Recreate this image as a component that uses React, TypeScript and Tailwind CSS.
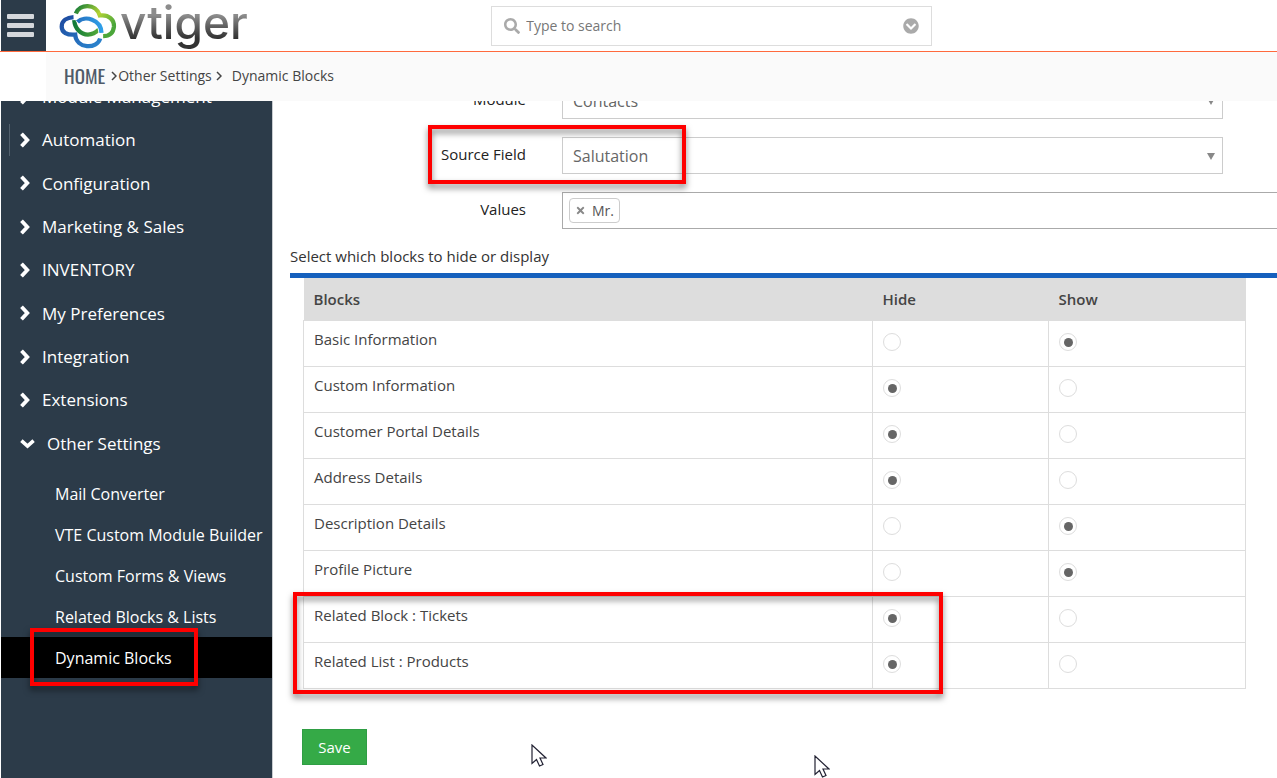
import { FaChevronCircleDown, FaSearch, FaTimes } from 'react-icons/fa';

const menu = [
  'Module Management',
  'Automation',
  'Configuration',
  'Marketing & Sales',
  'INVENTORY',
  'My Preferences',
  'Integration',
  'Extensions',
];

const subMenu = [
  'Mail Converter',
  'VTE Custom Module Builder',
  'Custom Forms & Views',
  'Related Blocks & Lists',
  'Dynamic Blocks',
];

const blocks = [
  { name: 'Basic Information', hidden: false },
  { name: 'Custom Information', hidden: true },
  { name: 'Customer Portal Details', hidden: true },
  { name: 'Address Details', hidden: true },
  { name: 'Description Details', hidden: false },
  { name: 'Profile Picture', hidden: false },
  { name: 'Related Block : Tickets', hidden: true },
  { name: 'Related List : Products', hidden: true },
];

const Highlight = ({ className }: { className: string }) => (
  <div
    className={`pointer-events-none absolute z-10 border-4 border-[#fe0000] drop-shadow-[0_4px_3px_rgba(0,0,0,0.5)] ${className}`}
  />
);

const Pointer = ({ className }: { className: string }) => (
  <svg viewBox="0 0 16 24" className={`pointer-events-none absolute h-6 w-4 ${className}`}>
    <path
      d="M1 1v18.500l4.500-4 3 6.500 3.500-1.500-3-6.500h6z"
      fill="#fff"
      stroke="#222233"
      strokeWidth="1.200"
    />
  </svg>
);

const Crumb = () => (
  <svg viewBox="0 0 6 10" className="h-[10px] w-[6px]" fill="none" stroke="currentColor" strokeWidth="1.500">
    <path d="M1 1L5 5L1 9" />
  </svg>
);

const Logo = () => (
  <a href="#" aria-label="vtiger" className="ml-3 flex items-center gap-0.5">
    <svg viewBox="176 6 180 140" className="h-[46px] w-[60px]" fill="none" strokeWidth="13">
      <defs>
        <linearGradient id="leaf" x1="0" y1="0" x2="1" y2="0.6">
          <stop offset="0" stopColor="#127a38" />
          <stop offset="0.55" stopColor="#b4d434" />
          <stop offset="1" stopColor="#4ba63a" />
        </linearGradient>
        <linearGradient id="fern" x1="0" y1="0" x2="1" y2="0">
          <stop offset="0" stopColor="#127a38" />
          <stop offset="1" stopColor="#55ab39" />
        </linearGradient>
        <linearGradient id="sea" x1="0" y1="0" x2="1" y2="1">
          <stop offset="0" stopColor="#1e4a9f" />
          <stop offset="1" stopColor="#2b86cf" />
        </linearGradient>
        <linearGradient id="sky" x1="0" y1="0" x2="1" y2="0">
          <stop offset="0" stopColor="#2672c0" />
          <stop offset="1" stopColor="#2f9fe8" />
        </linearGradient>
      </defs>
      <path d="M229 38C240 8 290 6 302 44C330 40 346 58 345 78C343 98 330 107 312 107" stroke="url(#leaf)" />
      <path d="M222 49C202 50 186 60 186 78C186 96 202 104 227 102C230 146 294 148 303 114" stroke="url(#sea)" />
      <path d="M224 58C226 84 244 102 266 102C282 102 290 96 300 86" stroke="url(#fern)" />
      <path d="M234 66C256 42 306 56 307 97" stroke="#ffffff" strokeWidth="18" />
      <path d="M234 64C256 42 306 56 307 97" stroke="url(#sky)" />
    </svg>
    <span className="self-start bg-linear-to-b from-[#8c8c8c] from-30% to-[#333333] to-75% bg-clip-text pb-[7px] font-['Inter'] text-[46px] leading-[44px] font-medium text-transparent">
      vtiger
    </span>
  </a>
);

const Sidebar = () => (
  <nav className="ml-px w-[272px] shrink-0 border-r border-[#c8ccd0] bg-[#2c3b49] text-white">
    <ul className="-mt-[26px] grid h-[390px] auto-rows-fr text-[17px]">
      {menu.map((item) => (
        <li key={item} className="relative flex items-center">
          {item === 'Automation' && <span className="absolute left-2 h-8 w-px bg-[#52606d]" />}
          <a href="#" className="flex items-center gap-3 pl-[19px]">
            <svg viewBox="0 0 10 16" className="h-4 w-[10px]" fill="none" stroke="currentColor" strokeWidth="3.800">
              <path d="M1.500 1.800L7.300 8L1.500 14.200" />
            </svg>
            {item}
          </a>
        </li>
      ))}
      <li className="flex items-center">
        <a href="#" className="flex items-center gap-3 pl-[19px]">
          <svg viewBox="0 0 16 12" className="h-3 w-[15px]" fill="none" stroke="currentColor" strokeWidth="3.800">
            <path d="M1.500 3.500L8 9.300L14.500 3.500" />
          </svg>
          Other Settings
        </a>
      </li>
    </ul>
    <ul className="mt-2 text-base">
      {subMenu.map((item) => (
        <li key={item} className={item === 'Dynamic Blocks' ? 'relative bg-black' : ''}>
          <a href="#" className="flex h-[41px] items-center pl-[54px] whitespace-nowrap">
            {item}
          </a>
          {item === 'Dynamic Blocks' && <Highlight className="-top-[9px] left-[29px] h-[58px] w-[168px]" />}
        </li>
      ))}
    </ul>
  </nav>
);

const SelectRow = ({ id, label, value, marked }: { id: string; label: string; value: string; marked?: boolean }) => (
  <div className="relative flex h-[37px]">
    <label htmlFor={id} className="w-[253px] shrink-0 pt-[6px] text-right text-[#222222]">
      {label}
    </label>
    <div className="relative mr-[54px] ml-9 flex-1">
      <select id={id} className="h-full w-full appearance-none border border-[#cccccc] bg-white px-[10px] pt-px text-base text-[#666666]">
        <option>{value}</option>
      </select>
      <svg viewBox="0 0 8 7" className="pointer-events-none absolute top-4 right-2 h-[7px] w-2">
        <path d="M0 0h8L4 7z" fill="#888888" />
      </svg>
    </div>
    {marked && <Highlight className="-top-3 left-[155px] h-[59px] w-[258px]" />}
  </div>
);

const Choice = ({ name, label, checked }: { name: string; label: string; checked: boolean }) => (
  <input
    type="radio"
    name={name}
    aria-label={label}
    defaultChecked={checked}
    className="grid size-[18px] appearance-none place-items-center rounded-full border border-[#dddddd] bg-white before:size-[9px] before:rounded-full checked:before:bg-[#666666]"
  />
);

const BlocksTable = () => (
  <div className="relative mr-[31px] ml-[30px]">
    <table className="w-full table-fixed border-collapse text-left text-[#444444]">
      <thead>
        <tr className="h-[43px] bg-[#dddddd]">
          <th className="px-[10px] font-semibold">Blocks</th>
          <th className="w-[176px] px-[10px] font-semibold">Hide</th>
          <th className="w-[197px] px-[10px] font-semibold">Show</th>
        </tr>
      </thead>
      <tbody>
        {blocks.map(({ name, hidden }) => (
          <tr key={name} className="h-[46px] align-top">
            <td className="border border-[#dddddd] px-[10px] pt-[7px]">{name}</td>
            <td className="border border-[#dddddd] px-[10px] pt-3">
              <Choice name={name} label={`Hide ${name}`} checked={hidden} />
            </td>
            <td className="border border-[#dddddd] px-[10px] pt-3">
              <Choice name={name} label={`Show ${name}`} checked={!hidden} />
            </td>
          </tr>
        ))}
      </tbody>
    </table>
    <Highlight className="-bottom-[5px] -left-[10px] h-[102px] w-[650px]" />
  </div>
);

const App = () => {
  return (
    <div className="flex h-screen flex-col overflow-hidden bg-white font-['Open_Sans',sans-serif] text-[15px]">
      <header className="flex h-[52px] shrink-0 border-b border-b-[#ff6a3d]">
        <button aria-label="Menu" className="ml-px flex w-[45px] items-center bg-[#2c3b49] pl-[6px] text-[#d5d8dc]">
          <svg viewBox="0 0 27 23" className="h-[23px] w-[27px]" fill="currentColor">
            <rect width="27" height="5" rx="1" />
            <rect y="9" width="27" height="5" rx="1" />
            <rect y="18" width="27" height="5" rx="1" />
          </svg>
        </button>
        <Logo />
        <div className="my-auto ml-auto flex h-10 w-[441px] items-center gap-[6px] border border-[#dddddd] px-3 text-[#aaaaaa]">
          <FaSearch className="size-4" />
          <input
            aria-label="Search"
            placeholder="Type to search"
            className="min-w-0 flex-1 text-[14px] outline-none placeholder:text-[#777777]"
          />
          <FaChevronCircleDown className="size-4" />
        </div>
        <div className="w-[27%]" />
      </header>

      <div className="ml-[46px] flex h-[49px] shrink-0 items-center bg-[#fafafa] pb-0.5 pl-[18px] text-[14px] text-[#444444]">
        <a
          href="#"
          className="mr-[6px] font-['Oswald','Open_Sans_Condensed','Roboto_Condensed','Liberation_Sans'] text-[19px] text-[#4f5b69]"
        >
          HOME
        </a>
        <Crumb />
        <a href="#" className="mr-1 ml-px">
          Other Settings
        </a>
        <Crumb />
        <span className="ml-[10px]">Dynamic Blocks</span>
      </div>

      <div className="flex min-h-0 flex-1 overflow-hidden">
        <Sidebar />
        <main className="relative min-w-0 flex-1 overflow-hidden">
          <form className="-mt-[19px]">
            <div className="flex flex-col gap-[18px]">
              <SelectRow id="module" label="Module" value="Contacts" />
              <SelectRow id="source" label="Source Field" value="Salutation" marked />
              <div className="flex h-[37px]">
                <label htmlFor="values" className="w-[253px] shrink-0 pt-[6px] text-right text-[#222222]">
                  Values
                </label>
                <div className="ml-9 flex flex-1 items-center border border-r-0 border-[#aaaaaa] pl-[6px]">
                  <span className="flex h-[25px] items-center gap-[6px] rounded-sm border border-[#cccccc] px-[5px] text-[14px] text-[#555555]">
                    <button type="button" aria-label="Remove Mr." className="text-[#888888]">
                      <FaTimes className="size-[11px]" />
                    </button>
                    Mr.
                  </span>
                  <input id="values" className="min-w-0 flex-1 outline-none" />
                </div>
              </div>
            </div>

            <h2 className="mt-4 ml-[17px] border-b-[5px] border-[#1560bd] pb-[5px] text-[#333333]">
              Select which blocks to hide or display
            </h2>
            <BlocksTable />
            <button type="button" className="mt-10 ml-[29px] h-9 w-[65px] border border-[#2f9e44] bg-[#35aa47] text-white">
              Save
            </button>
          </form>
          <Pointer className="top-[643px] left-[258px]" />
          <Pointer className="top-[654px] left-[541px]" />
        </main>
      </div>
    </div>
  );
};

export default App;
